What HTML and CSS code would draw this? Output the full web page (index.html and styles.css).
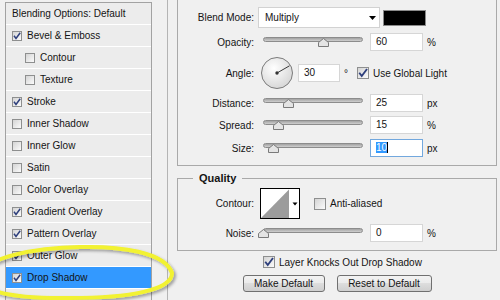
FILE: index.html
```html
<!DOCTYPE html>
<html lang="en">

<head>
    <meta charset="UTF-8">
    <meta name="viewport" content="width=device-width, initial-scale=1.0">
    <title>Layer Style - Drop Shadow</title>
    <link rel="stylesheet" href="styles.css">
</head>

<body>
    <div class="dialog">
        <ul class="style-list">
            <li class="style-item heading">Blending Options: Default</li>
            <li class="style-item"><span class="check"><svg viewBox="0 0 8 8"><path d="M1 3.8 L3 6.4 L7.2 0.8"/></svg></span>Bevel &amp; Emboss</li>
            <li class="style-item sub"><span class="check"></span>Contour</li>
            <li class="style-item sub"><span class="check"></span>Texture</li>
            <li class="style-item"><span class="check"><svg viewBox="0 0 8 8"><path d="M1 3.8 L3 6.4 L7.2 0.8"/></svg></span>Stroke</li>
            <li class="style-item"><span class="check"></span>Inner Shadow</li>
            <li class="style-item"><span class="check"></span>Inner Glow</li>
            <li class="style-item"><span class="check"></span>Satin</li>
            <li class="style-item"><span class="check"></span>Color Overlay</li>
            <li class="style-item"><span class="check"><svg viewBox="0 0 8 8"><path d="M1 3.8 L3 6.4 L7.2 0.8"/></svg></span>Gradient Overlay</li>
            <li class="style-item"><span class="check"><svg viewBox="0 0 8 8"><path d="M1 3.8 L3 6.4 L7.2 0.8"/></svg></span>Pattern Overlay</li>
            <li class="style-item"><span class="check"><svg viewBox="0 0 8 8"><path d="M1 3.8 L3 6.4 L7.2 0.8"/></svg></span>Outer Glow</li>
            <li class="style-item selected"><span class="check"><svg viewBox="0 0 8 8"><path d="M1 3.8 L3 6.4 L7.2 0.8"/></svg></span>Drop Shadow</li>
            <li class="style-item"></li>
        </ul>

        <div class="divider"></div>

        <div class="options">
            <fieldset class="group structure">
                <div class="row blend">
                    <span class="label">Blend Mode:</span>
                    <div class="select">Multiply
                        <svg class="arrow" viewBox="0 0 7 4"><polygon points="0,0 7,0 3.5,4"/></svg>
                    </div>
                    <span class="swatch"></span>
                </div>
                <div class="row opacity">
                    <span class="label">Opacity:</span>
                    <div class="slider">
                        <span class="track"></span>
                        <svg class="thumb" style="left: 60%" viewBox="0 0 11 9"><polygon points="5.5,0.5 10.5,4.5 10.5,8.5 0.5,8.5 0.5,4.5"/></svg>
                    </div>
                    <span class="value">60</span>
                    <span class="unit">%</span>
                </div>
                <div class="row angle">
                    <span class="label">Angle:</span>
                    <svg class="dial" viewBox="0 0 32 32">
                        <defs>
                            <radialGradient id="dialFill" cx="40%" cy="35%" r="75%">
                                <stop offset="0" stop-color="#ffffff"/>
                                <stop offset="1" stop-color="#d2d2d2"/>
                            </radialGradient>
                        </defs>
                        <circle cx="16" cy="16" r="15.5" fill="url(#dialFill)" stroke="#7b7b7b"/>
                        <line x1="16" y1="16" x2="28.5" y2="8.8" stroke="#3a3a3a"/>
                        <circle cx="16" cy="16" r="1.7" fill="#333"/>
                    </svg>
                    <span class="value short">30</span>
                    <span class="degree">°</span>
                    <span class="check big"><svg viewBox="0 0 8 8"><path d="M1 3.8 L3 6.4 L7.2 0.8"/></svg></span>
                    <span>Use Global Light</span>
                </div>
                <div class="row distance">
                    <span class="label">Distance:</span>
                    <div class="slider">
                        <span class="track"></span>
                        <svg class="thumb" style="left: 25%" viewBox="0 0 11 9"><polygon points="5.5,0.5 10.5,4.5 10.5,8.5 0.5,8.5 0.5,4.5"/></svg>
                    </div>
                    <span class="value">25</span>
                    <span class="unit">px</span>
                </div>
                <div class="row spread">
                    <span class="label">Spread:</span>
                    <div class="slider">
                        <span class="track"></span>
                        <svg class="thumb" style="left: 15%" viewBox="0 0 11 9"><polygon points="5.5,0.5 10.5,4.5 10.5,8.5 0.5,8.5 0.5,4.5"/></svg>
                    </div>
                    <span class="value">15</span>
                    <span class="unit">%</span>
                </div>
                <div class="row size">
                    <span class="label">Size:</span>
                    <div class="slider">
                        <span class="track"></span>
                        <svg class="thumb" style="left: 10%" viewBox="0 0 11 9"><polygon points="5.5,0.5 10.5,4.5 10.5,8.5 0.5,8.5 0.5,4.5"/></svg>
                    </div>
                    <span class="value focus"><span class="selection">10</span><span class="caret"></span></span>
                    <span class="unit">px</span>
                </div>
            </fieldset>

            <fieldset class="group quality">
                <legend>Quality</legend>
                <div class="row contour">
                    <span class="label">Contour:</span>
                    <svg class="contour-picker" viewBox="0 0 40 31">
                        <rect x="0.5" y="0.5" width="39" height="30" fill="#fff" stroke="#000"/>
                        <polygon points="1,30 29,1.5 29,30" fill="#9c9c9c"/>
                        <polygon points="32.5,14.5 37.5,14.5 35,17.5" fill="#000"/>
                    </svg>
                    <span class="check big spaced"></span>
                    <span>Anti-aliased</span>
                </div>
                <div class="row noise">
                    <span class="label">Noise:</span>
                    <div class="slider">
                        <span class="track"></span>
                        <svg class="thumb" style="left: 0%" viewBox="0 0 11 9"><polygon points="5.5,0.5 10.5,4.5 10.5,8.5 0.5,8.5 0.5,4.5"/></svg>
                    </div>
                    <span class="value">0</span>
                    <span class="unit">%</span>
                </div>
            </fieldset>

            <div class="knockout">
                <span class="check big"><svg viewBox="0 0 8 8"><path d="M1 3.8 L3 6.4 L7.2 0.8"/></svg></span>
                <span>Layer Knocks Out Drop Shadow</span>
            </div>

            <div class="buttons">
                <span class="button make">Make Default</span>
                <span class="button reset">Reset to Default</span>
            </div>
        </div>

        <!-- marker ring drawn over the list -->
        <svg class="ring" viewBox="0 0 500 300">
            <defs>
                <filter id="ringShadow" x="-20%" y="-50%" width="140%" height="200%">
                    <feDropShadow dx="2" dy="2" stdDeviation="1.6" flood-color="#000" flood-opacity="0.35"/>
                </filter>
            </defs>
            <path d="M172 273 C165 252 120 246 80 247 C30 248 -10 258 -20 272 C-30 290 10 299 70 298 C130 298 172 290 172 273 Z"
                fill="none" stroke="#f2f230" stroke-width="4" filter="url(#ringShadow)"/>
        </svg>
    </div>
</body>

</html>
```

FILE: styles.css
```css
* {
    box-sizing: border-box;
}

body {
    margin: 0;
    background: #f0f0f0;
    font-family: "Liberation Sans", Arial, sans-serif;
    font-size: 10px;
    color: #141414;
    overflow: hidden;
}

.dialog {
    position: relative;
    display: flex;
    height: 300px;
    padding-left: 5px;
}

/* left list of styles */
.style-list {
    list-style: none;
    margin: 2px 0 0;
    padding: 0;
    width: 147px;
    border: 1px solid #a2a2a2;
    border-bottom: none;
    background: #ececec;
}

.style-item {
    display: flex;
    align-items: center;
    height: 22px;
    padding-left: 6px;
    border-bottom: 1px solid #ffffff;
}

.style-item.sub {
    padding-left: 19px;
}

.style-item.selected {
    background: #3399ff;
}

.check {
    flex: none;
    width: 10px;
    height: 10px;
    margin-right: 5px;
    border: 1px solid #8e8f8f;
    background: linear-gradient(135deg, #d4d4d4, #fbfbfb);
}

.check svg {
    display: block;
    width: 100%;
    height: 100%;
    fill: none;
    stroke: #2e3f7c;
    stroke-width: 1.5;
}

.check.big {
    width: 12px;
    height: 12px;
    margin-right: 4px;
}

.divider {
    width: 1px;
    margin-left: 15px;
    background: #b4b4b4;
}

/* right side options */
.options {
    width: 320px;
    margin-left: 9px;
}

.group {
    margin: 0;
    padding: 0 0 8px;
    min-width: 0;
    border: 1px solid #a9a9a9;
}

.structure {
    border-top: none;
    padding-top: 7px;
}

.quality {
    margin-top: 6px;
    padding-top: 3px;
}

.quality legend {
    margin-left: 15px;
    padding: 0 6px;
    font-size: 11px;
    line-height: 13px;
    font-weight: bold;
}

.row {
    display: flex;
    align-items: center;
    height: 18px;
    margin-top: 5px;
}

.row.blend {
    height: 21px;
    margin-top: 0;
}

.row.angle {
    height: 32px;
    margin-top: 6px;
}

.row.spread {
    margin-top: 4px;
}

.row.contour {
    height: 31px;
    margin-top: 0;
}

.label {
    flex: none;
    width: 76px;
    margin-right: 4px;
    text-align: right;
}

.select {
    display: flex;
    align-items: center;
    width: 122px;
    height: 21px;
    padding-left: 6px;
    background: #fff;
    border: 1px solid #d2d2d2;
}

.select .arrow {
    width: 7px;
    height: 4px;
    margin-left: auto;
    margin-right: 3px;
    fill: #000;
}

.swatch {
    width: 43px;
    height: 16px;
    margin-left: 3px;
    background: #000;
    border: 1px solid #8a8a8a;
}

.slider {
    position: relative;
    width: 100px;
    height: 10px;
    margin-left: 5px;
}

.track {
    display: block;
    height: 5px;
    border: 1px solid #8c8c8c;
    border-radius: 3px;
    background: linear-gradient(#a2a2a2, #cfcfcf);
}

.thumb {
    position: absolute;
    top: 1px;
    width: 11px;
    height: 9px;
    margin-left: -5px;
    fill: #e4e4e4;
    stroke: #7a7a7a;
}

.value {
    width: 53px;
    height: 18px;
    margin-left: 7px;
    padding-left: 5px;
    line-height: 16px;
    background: #fff;
    border: 1px solid #d6d6d6;
}

.value.short {
    width: 42px;
    margin-left: 5px;
}

.value.focus {
    border-color: #72a8de;
}

.selection {
    background: #3399ff;
    color: #fff;
}

.caret {
    display: inline-block;
    width: 1px;
    height: 11px;
    background: #000;
    vertical-align: -2px;
}

.unit {
    margin-left: 4px;
}

.dial {
    width: 32px;
    height: 32px;
    margin-left: 3px;
}

.degree {
    margin-left: 4px;
    margin-right: 9px;
}

.contour-picker {
    width: 40px;
    height: 31px;
    margin-left: 2px;
}

.check.spaced {
    margin-left: 14px;
}

.knockout {
    display: flex;
    align-items: center;
    height: 12px;
    margin-top: 5px;
    padding-left: 86px;
}

.buttons {
    display: flex;
    justify-content: center;
    gap: 12px;
    margin-top: 7px;
}

.button {
    display: flex;
    align-items: center;
    justify-content: center;
    height: 17px;
    border: 1px solid #707070;
    border-radius: 3px;
    background: linear-gradient(#f3f3f3, #ebebeb 45%, #dddddd 50%, #cfcfcf);
}

.button.make {
    width: 82px;
}

.button.reset {
    width: 95px;
}

.ring {
    position: absolute;
    left: 0;
    top: 0;
    width: 500px;
    height: 300px;
    overflow: visible;
    pointer-events: none;
}
```
